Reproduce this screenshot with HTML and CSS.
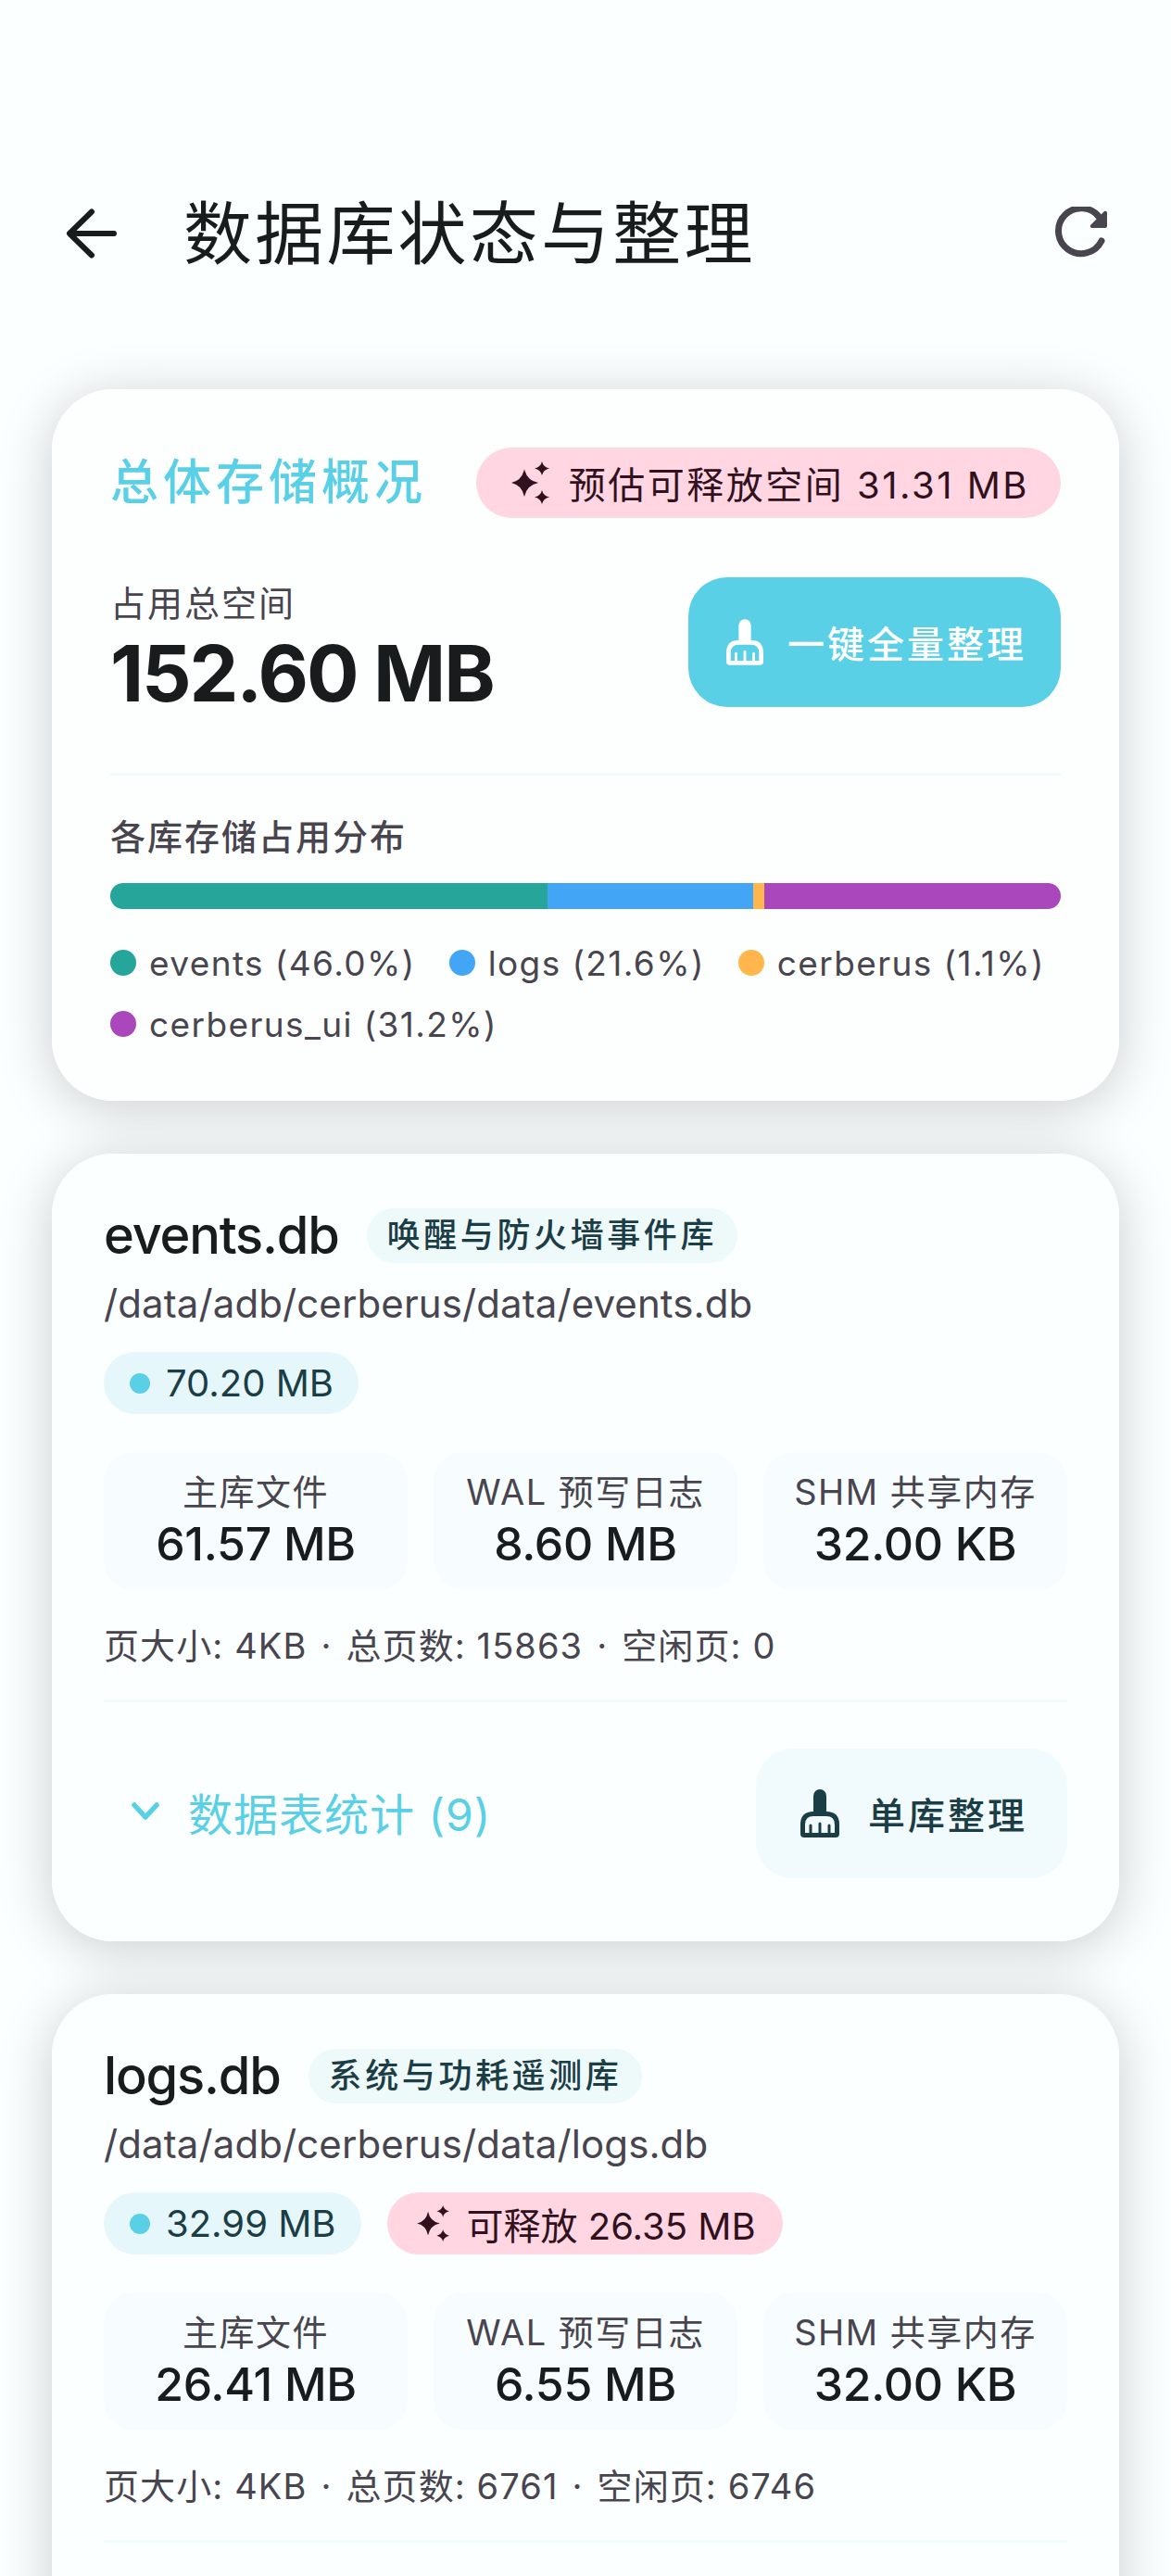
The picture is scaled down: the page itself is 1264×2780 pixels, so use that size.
FILE: index.html
```html
<!DOCTYPE html>
<html lang="zh-CN">
<head>
<meta charset="utf-8">
<title>数据库状态与整理</title>
<link rel="stylesheet" href="styles.css">
</head>
<body>
<svg class="defs" width="0" height="0" aria-hidden="true">
  <symbol id="broom" viewBox="0 0 42 52">
    <path fill="currentColor" d="M14 7a7 7 0 0 1 14 0V24h-14z"/>
    <path fill="currentColor" fill-rule="evenodd" d="M0 48V38Q0 24 14 24H28Q42 24 42 38V48Q42 52 38 52H4Q0 52 0 48ZM5 47H37V38Q37 29 28 29H14Q5 29 5 38Z"/>
    <path fill="currentColor" d="M9.500 47V39a1.500 1.500 0 0 1 3 0V47zM19.500 47V37a1.500 1.500 0 0 1 3 0V47zM29.500 47V39a1.500 1.500 0 0 1 3 0V47z"/>
  </symbol>
  <symbol id="spark" viewBox="0 0 42 46">
    <path fill="currentColor" d="M14 8Q16.500 20.500 29 23Q16.500 25.500 14 38Q11.500 25.500 0 23Q11.500 20.500 14 8Z"/>
    <path fill="currentColor" d="M33 0Q34.200 5.800 41 7.500Q34.200 9.200 33 15Q31.800 9.200 25 7.500Q31.800 5.800 33 0Z"/>
    <path fill="currentColor" d="M33 31Q34.200 36.800 41 38.500Q34.200 40.200 33 46Q31.800 40.200 25 38.500Q31.800 36.800 33 31Z"/>
  </symbol>
</svg>
<div class="page">
  <header class="topbar">
    <svg class="back" viewBox="0 0 56 56"><path d="M52 28H5M28 4.500L4 28L28 51.500" fill="none" stroke="currentColor" stroke-width="6" stroke-linecap="round" stroke-linejoin="round"/></svg>
    <h1 class="page-title">数据库状态与整理</h1>
    <svg class="refresh" viewBox="0 0 58 58"><path d="M50 37A24.500 24.500 0 1 1 48 12" fill="none" stroke="currentColor" stroke-width="7" stroke-linecap="round"/><path d="M56 6.500V21a2 2 0 0 1-2 2H40a2 2 0 0 1-1.500-3.500L52.500 5.500A2 2 0 0 1 56 6.500Z" fill="currentColor"/></svg>
  </header>

  <section class="card overview">
    <div class="row-between">
      <h2 class="overview-title">总体存储概况</h2>
      <span class="pink-pill big"><svg class="spark"><use href="#spark"/></svg>预估可释放空间 31.31 MB</span>
    </div>
    <div class="row-between total-row">
      <div class="total">
        <div class="total-label">占用总空间</div>
        <div class="total-value">152.60 MB</div>
      </div>
      <button class="primary-btn"><svg class="broom-big"><use href="#broom"/></svg>一键全量整理</button>
    </div>
    <div class="rule"></div>
    <div class="dist-label">各库存储占用分布</div>
    <div class="bar">
      <span class="seg c-events" style="width:46%"></span>
      <span class="seg c-logs" style="width:21.6%"></span>
      <span class="seg c-cerberus" style="width:1.2%"></span>
      <span class="seg c-ui" style="width:31.2%"></span>
    </div>
    <ul class="legend">
      <li><i class="dot c-events"></i>events (46.0%)</li>
      <li><i class="dot c-logs"></i>logs (21.6%)</li>
      <li><i class="dot c-cerberus"></i>cerberus (1.1%)</li>
      <li><i class="dot c-ui"></i>cerberus_ui (31.2%)</li>
    </ul>
  </section>

  <section class="card db">
    <div class="db-head"><span class="db-name">events.db</span><span class="db-tag">唤醒与防火墙事件库</span></div>
    <div class="db-path">/data/adb/cerberus/data/events.db</div>
    <div class="pills">
      <span class="size-pill"><i class="size-dot"></i>70.20 MB</span>
    </div>
    <div class="stats">
      <div class="stat"><div class="stat-label">主库文件</div><div class="stat-value">61.57 MB</div></div>
      <div class="stat"><div class="stat-label">WAL 预写日志</div><div class="stat-value">8.60 MB</div></div>
      <div class="stat"><div class="stat-label">SHM 共享内存</div><div class="stat-value">32.00 KB</div></div>
    </div>
    <div class="meta">页大小: 4KB<span class="sep">·</span>总页数: 15863<span class="sep">·</span>空闲页: 0</div>
    <div class="rule db-rule"></div>
    <div class="row-between actions">
      <div class="toggle"><svg class="chev" viewBox="0 0 30 20"><path d="M3 3L15 16L27 3" fill="none" stroke="currentColor" stroke-width="5.500" stroke-linecap="round" stroke-linejoin="round"/></svg>数据表统计 (9)</div>
      <button class="tonal-btn"><svg class="broom-small"><use href="#broom"/></svg>单库整理</button>
    </div>
  </section>

  <section class="card db">
    <div class="db-head"><span class="db-name">logs.db</span><span class="db-tag">系统与功耗遥测库</span></div>
    <div class="db-path">/data/adb/cerberus/data/logs.db</div>
    <div class="pills">
      <span class="size-pill"><i class="size-dot"></i>32.99 MB</span>
      <span class="pink-pill small"><svg class="spark-small"><use href="#spark"/></svg>可释放 26.35 MB</span>
    </div>
    <div class="stats">
      <div class="stat"><div class="stat-label">主库文件</div><div class="stat-value">26.41 MB</div></div>
      <div class="stat"><div class="stat-label">WAL 预写日志</div><div class="stat-value">6.55 MB</div></div>
      <div class="stat"><div class="stat-label">SHM 共享内存</div><div class="stat-value">32.00 KB</div></div>
    </div>
    <div class="meta">页大小: 4KB<span class="sep">·</span>总页数: 6761<span class="sep">·</span>空闲页: 6746</div>
    <div class="rule db-rule"></div>
  </section>
</div>
</body>
</html>
```
FILE: styles.css
```css
* { box-sizing: border-box; }
html, body { margin: 0; padding: 0; height: 2780px; overflow: hidden; background: #fbffff; }
body { font-family: "Inter", "Noto Sans CJK SC", sans-serif; color: #191c1d; }
.defs { position: absolute; }
.page { position: relative; isolation: isolate; height: 2780px; overflow: hidden; padding: 168px 56px 0; }

.topbar { display: flex; align-items: center; height: 168px; margin-bottom: 84px; }
.back { width: 56px; height: 56px; margin-left: 15px; color: #191c1d; flex: none; }
.page-title { margin: 0 0 0 71px; font-size: 74px; line-height: 96px; font-weight: 400; letter-spacing: 3.200px; flex: 1; }
.refresh { width: 58px; height: 58px; margin-right: 11px; color: #49454f; flex: none; }

.card { position: relative; background: #fbffff; border-radius: 66px; margin-bottom: 57px; }
.card::before { content: ""; position: absolute; inset: 0; z-index: -1; border-radius: inherit; box-shadow: 0 8px 60px rgba(0,0,0,.2); }
.overview { background: #fdffff; padding: 62px 63px 62px 63px; height: 768px; }
.row-between { display: flex; align-items: center; justify-content: space-between; }
.overview-title { margin: 0; font-size: 52px; line-height: 78px; font-weight: 500; letter-spacing: 5px; color: #5ad0e6; }
.pink-pill { display: inline-flex; align-items: center; background: #ffd6e1; color: #31111d; border-radius: 40px; }
.pink-pill.big { height: 76px; padding: 0 34px 0 38px; font-size: 40px; letter-spacing: 2.500px; }
.spark { width: 42px; height: 46px; margin-right: 20px; flex: none; }
.total-row { margin-top: 63px; height: 140px; }
.total { padding-top: 18px; }
.total-label { font-size: 38px; line-height: 50px; color: #49454f; letter-spacing: 2px; }
.total-value { font-size: 84px; line-height: 102px; font-weight: 700; letter-spacing: -2.200px; }
.primary-btn { display: flex; align-items: center; height: 140px; border: 0; border-radius: 42px; background: #5ad0e6; color: #fff; padding: 0 37px 0 41px; font: inherit; font-size: 40px; font-weight: 500; letter-spacing: 3px; }
.broom-big { width: 40px; height: 50px; margin-right: 26px; flex: none; }
.rule { height: 3px; background: #f1fbfb; }
.overview .rule { margin-top: 71px; }
.dist-label { margin-top: 42px; font-size: 38px; line-height: 48px; font-weight: 500; color: #49454f; letter-spacing: 2px; }
.bar { display: flex; height: 28px; margin-top: 26px; border-radius: 14px; overflow: hidden; }
.seg { display: block; }
.c-events { background: #26a69a; }
.c-logs { background: #42a5f5; }
.c-cerberus { background: #ffb74d; }
.c-ui { background: #ab47bc; }
.legend { list-style: none; margin: 36px 0 0; padding: 0; display: flex; flex-wrap: wrap; gap: 22px 36px; }
.legend li { display: flex; align-items: center; height: 44px; font-size: 37px; letter-spacing: 1.400px; color: #49454f; }
.dot { width: 28px; height: 28px; border-radius: 50%; margin-right: 14px; }

.db { padding: 59px 56px 70px; height: 850px; }
.db-head { display: flex; align-items: center; height: 59px; }
.db-name { font-size: 56px; font-weight: 500; line-height: 59px; letter-spacing: -1.200px; }
.db-tag { margin-left: 30px; height: 59px; line-height: 59px; padding: 0 22px; background: #eef9fa; border-radius: 30px; font-size: 36px; letter-spacing: 3.600px; color: #1b3d45; font-weight: 500; }
.db-path { margin-top: 15px; font-size: 42px; line-height: 58px; color: #49454f; letter-spacing: .1px; }
.pills { display: flex; gap: 28px; margin-top: 23px; }
.size-pill { display: inline-flex; align-items: center; height: 67px; padding: 0 27px 0 28px; background: #e6f7fb; border-radius: 34px; font-size: 40px; letter-spacing: 0; color: #1b3d45; }
.size-dot { width: 22px; height: 22px; border-radius: 50%; background: #5ad0e6; margin-right: 17px; }
.pink-pill.small { height: 67px; padding: 0 29px 0 32px; font-size: 40px; letter-spacing: 0; border-radius: 34px; }
.spark-small { width: 36px; height: 39px; margin-right: 18px; flex: none; }
.stats { display: grid; grid-template-columns: repeat(3, 1fr); gap: 28px; margin-top: 41px; }
.stat { height: 149px; background: #f7fdfe; border-radius: 32px; text-align: center; padding-top: 19px; }
.stat-label { font-size: 38px; line-height: 48px; color: #49454f; letter-spacing: 1.500px; white-space: nowrap; }
.stat-value { font-size: 50px; line-height: 64px; font-weight: 500; letter-spacing: -.3px; }
.meta { margin-top: 36px; font-size: 38px; line-height: 48px; color: #49454f; letter-spacing: 1.100px; }
.sep { margin: 0 15px; }
.db-rule { margin-top: 34px; }
.actions { margin-top: 50px; height: 140px; }
.toggle { display: flex; align-items: center; color: #5ad0e6; font-size: 48px; letter-spacing: 1px; padding: 0 0 4px 30px; }
.chev { width: 30px; height: 20px; margin-right: 31px; flex: none; }
.tonal-btn { display: flex; align-items: center; height: 140px; width: 336px; justify-content: center; padding: 0 0 0 5px; border: 0; border-radius: 40px; background: #f1fafc; color: #1b3d45; font: inherit; font-size: 40px; font-weight: 500; letter-spacing: 3px; }
.broom-small { width: 42px; height: 52px; margin-right: 31px; flex: none; }
```
